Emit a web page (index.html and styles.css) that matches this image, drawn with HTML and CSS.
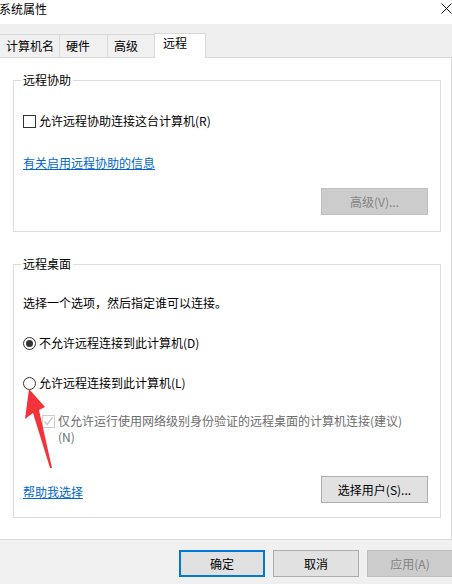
FILE: index.html
```html
<!DOCTYPE html>
<html lang="zh-CN">
<head>
    <meta charset="UTF-8">
    <meta name="viewport" content="width=device-width, initial-scale=1.0">
    <title>系统属性</title>
    <link rel="stylesheet" href="styles.css">
</head>
<body>
    <div class="titlebar">
        <span class="title">系统属性</span>
        <svg class="close" width="11" height="11" viewBox="0 0 11 11">
            <path d="M0.5 0.5 L10.5 10.5 M10.5 0.5 L0.5 10.5" stroke="#111" stroke-width="1" fill="none"/>
        </svg>
    </div>

    <div class="tabs">
        <div class="tab tab-name">计算机名</div>
        <div class="tab tab-hw">硬件</div>
        <div class="tab tab-adv">高级</div>
        <div class="tab tab-remote active">远程</div>
    </div>

    <div class="panel">
        <fieldset class="group group-assist">
            <legend>远程协助</legend>
            <label class="option">
                <span class="checkbox"></span>
                <span>允许远程协助连接这台计算机(R)</span>
            </label>
            <a href="#" class="link link-info">有关启用远程协助的信息</a>
            <div class="btn-row">
                <button class="btn btn-disabled">高级(V)...</button>
            </div>
        </fieldset>

        <fieldset class="group group-desktop">
            <legend>远程桌面</legend>
            <div class="intro">选择一个选项，然后指定谁可以连接。</div>
            <label class="option option-radio">
                <span class="radio checked"></span>
                <span>不允许远程连接到此计算机(D)</span>
            </label>
            <label class="option option-radio">
                <span class="radio"></span>
                <span>允许远程连接到此计算机(L)</span>
            </label>
            <label class="option option-nla">
                <span class="checkbox disabled">
                    <svg width="11" height="11" viewBox="0 0 11 11">
                        <path d="M1.5 5.5 L4 8.5 L9.5 1.5" stroke="#c4c4c4" stroke-width="1.3" fill="none"/>
                    </svg>
                </span>
                <span>仅允许运行使用网络级别身份验证的远程桌面的计算机连接(建议)<br>(N)</span>
            </label>
            <div class="bottom-row">
                <a href="#" class="link link-help">帮助我选择</a>
                <button class="btn">选择用户(S)...</button>
            </div>
        </fieldset>
    </div>

    <div class="footer">
        <button class="btn btn-footer btn-default">确定</button>
        <button class="btn btn-footer">取消</button>
        <button class="btn btn-footer btn-disabled">应用(A)</button>
    </div>

    <!-- red annotation arrow drawn over the dialog -->
    <svg class="arrow" width="452" height="584" viewBox="0 0 452 584">
        <polygon points="29,389 45,407 39,410 52,468 50,468 33,413 25,419" fill="#f2333a"/>
    </svg>
</body>
</html>
```

FILE: styles.css
```css
body {
    margin: 0;
    width: 452px;
    height: 584px;
    overflow: hidden;
    position: relative;
    background-color: #f0f0f0;
    font-family: "Noto Sans CJK SC", "Noto Sans", sans-serif;
    font-size: 12px;
    line-height: 16px;
    color: #000;
}
.titlebar {
    height: 24px;
    background-color: #fff;
    display: flex;
    justify-content: space-between;
    align-items: flex-start;
}
.title {
    padding-top: 1px;
    margin-left: -1px;
}
.close {
    margin-top: 3px;
}
.tabs {
    height: 33px;
    background-color: #efefef;
    display: flex;
    align-items: flex-end;
}
.tab {
    box-sizing: border-box;
    height: 23px;
    padding: 3px 0 0 6px;
    border: 1px solid #d9d9d9;
    border-bottom: none;
    border-left: none;
    background-color: #f0f0f0;
}
.tab-name {
    width: 60px;
}
.tab-hw {
    width: 48px;
}
.tab-adv {
    width: 47px;
}
.tab.active {
    position: relative;
    width: 52px;
    height: 25px;
    margin-bottom: -1px;
    margin-left: -1px;
    padding: 1px 0 0 8px;
    border-left: 1px solid #d9d9d9;
    background-color: #fff;
}
.panel {
    background-color: #fff;
    border: 1px solid #d9d9d9;
    margin-left: -1px;
    padding-bottom: 21px;
}
.group {
    border: 1px solid #dcdcdc;
    margin: 14px 10px 0 13px;
    padding: 0 12px 0 9px;
    min-width: 0;
}
.group-desktop {
    margin-top: 24px;
    padding-bottom: 14px;
}
.group-assist {
    padding-bottom: 16px;
}
.group legend {
    padding: 0 2px;
    margin-left: -2px;
}
.option {
    display: flex;
    align-items: center;
    gap: 3px;
    margin-top: 25px;
}
.option-radio {
    margin-top: 24px;
}
.option-nla {
    align-items: flex-start;
    margin-top: 22px;
    padding-left: 19px;
    color: #6d6d6d;
}
.checkbox {
    box-sizing: border-box;
    width: 13px;
    height: 13px;
    border: 1px solid #333;
    background-color: #fff;
    flex-shrink: 0;
}
.checkbox.disabled {
    border-color: #cccccc;
    margin-top: 2px;
    display: flex;
    align-items: center;
    justify-content: center;
}
.radio {
    box-sizing: border-box;
    width: 13px;
    height: 13px;
    border: 1px solid #333;
    border-radius: 50%;
    background-color: #fff;
    flex-shrink: 0;
    display: flex;
    align-items: center;
    justify-content: center;
}
.radio.checked::after {
    content: "";
    width: 7px;
    height: 7px;
    border-radius: 50%;
    background-color: #333;
}
.intro {
    margin-top: 23px;
}
.link {
    color: #0066cc;
    text-decoration: underline;
}
.link-info {
    display: inline-block;
    margin-top: 26px;
}
.btn-row {
    display: flex;
    justify-content: flex-end;
    margin-top: 17px;
}
.btn {
    box-sizing: border-box;
    width: 107px;
    height: 27px;
    padding: 0;
    border: 1px solid #adadad;
    background-color: #e1e1e1;
    font-family: inherit;
    font-size: 12px;
    color: #000;
}
.btn-disabled {
    background-color: #cccccc;
    border-color: #bfbfbf;
    color: #838383;
}
.bottom-row {
    display: flex;
    justify-content: space-between;
    align-items: center;
    margin-top: 31px;
}
.link-help {
    padding-top: 4px;
}
.footer {
    display: flex;
    gap: 8px;
    padding: 10px 0 0 179px;
}
.btn-footer {
    width: 86px;
    flex-shrink: 0;
}
.btn-default {
    border: 2px solid #0078d7;
}
.arrow {
    position: absolute;
    left: 0;
    top: 0;
    pointer-events: none;
}
```
